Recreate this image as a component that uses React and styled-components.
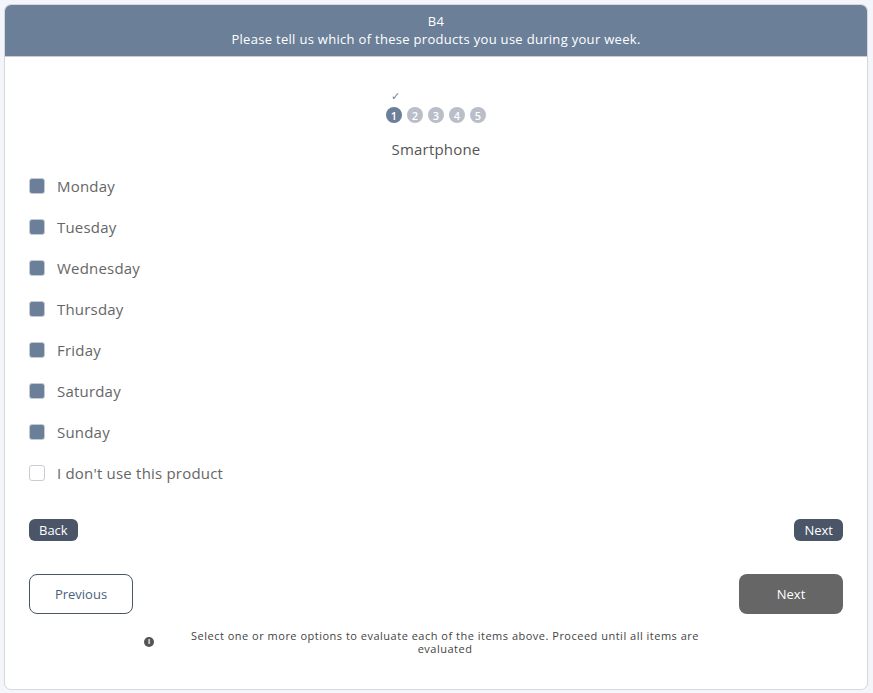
import styled, { createGlobalStyle } from "styled-components";

const days = ["Monday", "Tuesday", "Wednesday", "Thursday", "Friday", "Saturday", "Sunday"];

const GlobalStyle = createGlobalStyle`
  html, body {
    margin: 0;
    padding: 0;
    background: #f4f5fb;
    font-family: "Open Sans", "Liberation Sans", sans-serif;
  }
  * { box-sizing: border-box; }
`;

export default function App() {
  return (
    <>
      <GlobalStyle />
      <Page>
        <Card>
          <Header>
            <div>B4</div>
            <div>Please tell us which of these products you use during your week.</div>
          </Header>
          <Body>
            <Progress>
              <Check>✓</Check>
              <Steps>
                {[1, 2, 3, 4, 5].map((n) => (
                  <Step key={n} active={n === 1}>{n}</Step>
                ))}
              </Steps>
              <ItemName>Smartphone</ItemName>
            </Progress>
            <Options>
              {days.map((d) => (
                <Option key={d}>
                  <Box checked />
                  <span>{d}</span>
                </Option>
              ))}
              <Option>
                <Box />
                <span>I don't use this product</span>
              </Option>
            </Options>
            <SmallNav>
              <SmallButton>Back</SmallButton>
              <SmallButton>Next</SmallButton>
            </SmallNav>
            <BigNav>
              <OutlineButton>Previous</OutlineButton>
              <SolidButton>Next</SolidButton>
            </BigNav>
            <Hint>
              <InfoDot>i</InfoDot>
              <HintText>
                Select one or more options to evaluate each of the items above. Proceed until all items are evaluated
              </HintText>
            </Hint>
          </Body>
        </Card>
      </Page>
    </>
  );
}

const Page = styled.div`
  padding: 4px 5px 3px 4px;
`;

const Card = styled.div`
  background: #fff;
  border: 1px solid #d6d8de;
  border-radius: 7px;
  overflow: hidden;
  height: 686px;
`;

const Header = styled.div`
  background: #6b7f99;
  color: #fff;
  text-align: center;
  font-size: 13px;
  line-height: 18px;
  letter-spacing: 0.3px;
  padding: 7px 0 8px;
  height: 52px;
  border-bottom: 1px solid #c9ccd3;
`;

const Body = styled.div`
  padding: 0 24px 0 24px;
`;

const Progress = styled.div`
  display: flex;
  flex-direction: column;
  align-items: center;
  padding-top: 32px;
`;

const Check = styled.div`
  font-size: 11px;
  line-height: 14px;
  color: #6b7f99;
  margin-left: -82px;
`;

const Steps = styled.div`
  display: flex;
  gap: 5px;
  margin-top: 4px;
`;

const Step = styled.div`
  width: 16px;
  height: 16px;
  border-radius: 50%;
  background: ${(p) => (p.active ? "#6b7f99" : "#b9bec8")};
  color: #fff;
  font-size: 11px;
  font-weight: 600;
  display: flex;
  align-items: center;
  justify-content: center;
`;

const ItemName = styled.div`
  margin-top: 16px;
  font-size: 15px;
  color: #555;
  letter-spacing: 0.2px;
`;

const Options = styled.div`
  display: flex;
  flex-direction: column;
  margin-top: 6px;
`;

const Option = styled.label`
  display: flex;
  align-items: center;
  gap: 12px;
  height: 41px;
  font-size: 15px;
  color: #666;
  letter-spacing: 0.2px;
`;

const Box = styled.span`
  width: 16px;
  height: 16px;
  border-radius: 3px;
  background: ${(p) => (p.checked ? "#6b7f99" : "#fff")};
  border: 1px solid ${(p) => (p.checked ? "#c5cbd4" : "#c9ccd2")};
`;

const SmallNav = styled.div`
  display: flex;
  justify-content: space-between;
  margin-top: 26px;
`;

const SmallButton = styled.button`
  background: #4a5568;
  color: #fff;
  border: none;
  border-radius: 6px;
  font-family: inherit;
  font-size: 13px;
  height: 22px;
  padding: 0 10px;
`;

const BigNav = styled.div`
  display: flex;
  justify-content: space-between;
  margin-top: 33px;
`;

const OutlineButton = styled.button`
  width: 104px;
  height: 40px;
  background: #fff;
  border: 1px solid #4a5568;
  border-radius: 8px;
  color: #4a5f7c;
  font-family: inherit;
  font-size: 13px;
`;

const SolidButton = styled.button`
  width: 104px;
  height: 40px;
  background: #666;
  border: none;
  border-radius: 8px;
  color: #fff;
  font-family: inherit;
  font-size: 13px;
`;

const Hint = styled.div`
  display: flex;
  align-items: center;
  margin: 15px 0 0 115px;
  width: 592px;
`;

const InfoDot = styled.span`
  width: 10px;
  height: 10px;
  border-radius: 50%;
  background: #555;
  color: #fff;
  font-size: 7px;
  font-weight: 700;
  line-height: 10px;
  text-align: center;
  flex-shrink: 0;
`;

const HintText = styled.div`
  flex: 1;
  text-align: center;
  font-size: 11px;
  line-height: 13px;
  letter-spacing: 0.5px;
  color: #444;
  padding: 0 20px;
`;
